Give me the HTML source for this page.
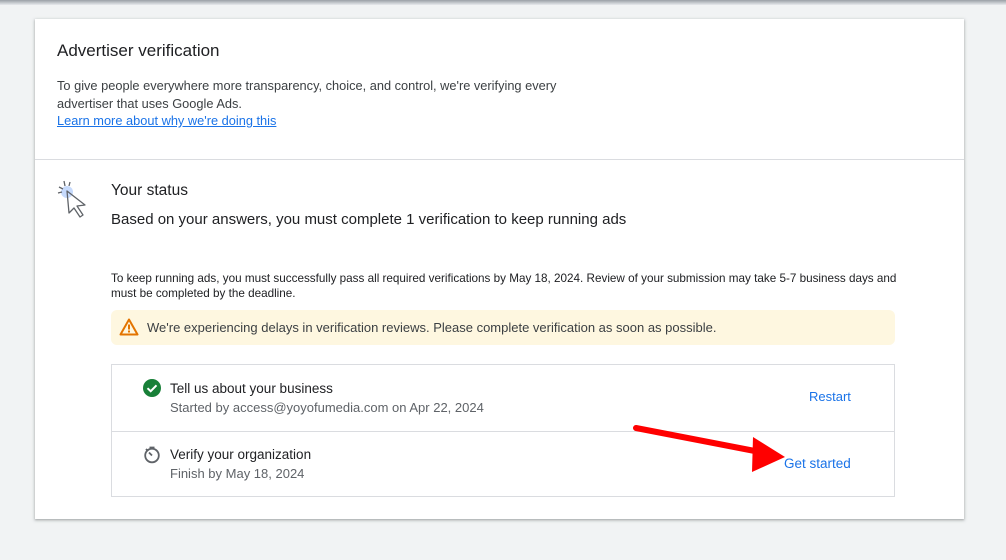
<!DOCTYPE html>
<html><head><style>
*{margin:0;padding:0;box-sizing:border-box}
body{width:1006px;height:560px;background:#f1f3f4;font-family:"Liberation Sans",Arial,sans-serif;position:relative;overflow:hidden;color:#202124}
.topline{position:absolute;left:0;top:0;width:1006px;height:5px;background:linear-gradient(#9aa0a6,#e8eaed)}
.card{position:absolute;left:35px;top:19px;width:929px;height:500px;background:#fff;box-shadow:0 1px 2px rgba(60,64,67,.3),0 1px 3px 1px rgba(60,64,67,.15)}
.t{position:absolute;white-space:nowrap}
.sep{position:absolute;left:0;width:929px;height:1px;background:#dadce0}
.warn{position:absolute;left:76px;top:291px;width:784px;height:35px;background:#fef7e0;border-radius:6px}
.box{position:absolute;left:76px;top:345px;width:784px;height:133px;border:1px solid #dadce0}
a{color:#1a73e8}
</style></head><body>
<div class="topline"></div>
<div class="card">
<div class="t" style="left:22px;top:22px;font-size:17px;">Advertiser verification</div>
<div class="t" style="left:22px;top:58px;font-size:12.8px;line-height:17.5px;color:#3c4043">To give people everywhere more transparency, choice, and control, we're verifying every<br>advertiser that uses Google Ads.<br><a href="#" style="text-decoration:underline">Learn more about why we're doing this</a></div>
<div class="sep" style="top:140px"></div>
<svg style="position:absolute;left:20px;top:160px" width="40" height="42" viewBox="0 0 40 42">
<circle cx="12" cy="13" r="6" fill="#c6dafc"/>
<path d="M12 12 L14 34 L19 29 L25 38 L28 36 L22 27 L30 26 Z" fill="none" stroke="#5f6368" stroke-width="1.3" stroke-linejoin="round"/>
<path d="M4 8 L8 10 M9 2 L10 7 M15 3 L14 7 M3 14 L7 13" stroke="#5f6368" stroke-width="1.3"/>
</svg>
<div class="t" style="left:76px;top:163px;font-size:15.5px;">Your status</div>
<div class="t" style="left:76px;top:192px;font-size:15px;">Based on your answers, you must complete 1 verification to keep running ads</div>
<div class="t" style="left:76px;top:252px;font-size:11.7px;line-height:15px;">To keep running ads, you must successfully pass all required verifications by May 18, 2024. Review of your submission may take 5-7 business days and<br>must be completed by the deadline.</div>
<div class="warn">
<svg style="position:absolute;left:8px;top:8px" width="20" height="18" viewBox="0 0 20 18"><path d="M10 1.5 L18.5 16.5 L1.5 16.5 Z" fill="none" stroke="#e37400" stroke-width="2" stroke-linejoin="round"/><rect x="9" y="6.5" width="2" height="5" fill="#e37400"/><rect x="9" y="12.5" width="2" height="2" fill="#e37400"/></svg>
<div class="t" style="left:36px;top:10px;font-size:13px;color:#3c4043">We're experiencing delays in verification reviews. Please complete verification as soon as possible.</div>
</div>
<div class="box">
<svg style="position:absolute;left:31px;top:14px" width="18" height="18" viewBox="0 0 18 18"><circle cx="9" cy="9" r="9" fill="#188038"/><path d="M4.5 9.2 L7.7 12.2 L13.5 6.3" fill="none" stroke="#fff" stroke-width="2"/></svg>
<div class="t" style="left:58px;top:16px;font-size:13.5px;">Tell us about your business</div>
<div class="t" style="left:58px;top:35px;font-size:13px;color:#5f6368">Started by access@yoyofumedia.com on Apr 22, 2024</div>
<div class="t" style="left:697px;top:24px;font-size:13px;color:#1a73e8">Restart</div>
<div style="position:absolute;left:0;top:66px;width:782px;height:1px;background:#dadce0"></div>
<svg style="position:absolute;left:31px;top:81px" width="18" height="18" viewBox="0 0 18 18"><circle cx="9" cy="9.5" r="6.8" fill="none" stroke="#5f6368" stroke-width="1.8"/><path d="M9 9.5 L6 6.5 M3 3 L5 5 M6.5 1.5 L11.5 1.5" stroke="#5f6368" stroke-width="1.8"/></svg>
<div class="t" style="left:58px;top:82px;font-size:13.5px;">Verify your organization</div>
<div class="t" style="left:58px;top:101px;font-size:13px;color:#5f6368">Finish by May 18, 2024</div>
<div class="t" style="left:672px;top:91px;font-size:13.5px;color:#1a73e8">Get started</div>
</div>
</div>
<svg style="position:absolute;left:0;top:0" width="1006" height="560"><path d="M636 428 L760 452" stroke="#ff0000" stroke-width="6" stroke-linecap="round"/><path d="M753 437 L785 457 L752 472 Z" fill="#ff0000"/></svg>
</body></html>
